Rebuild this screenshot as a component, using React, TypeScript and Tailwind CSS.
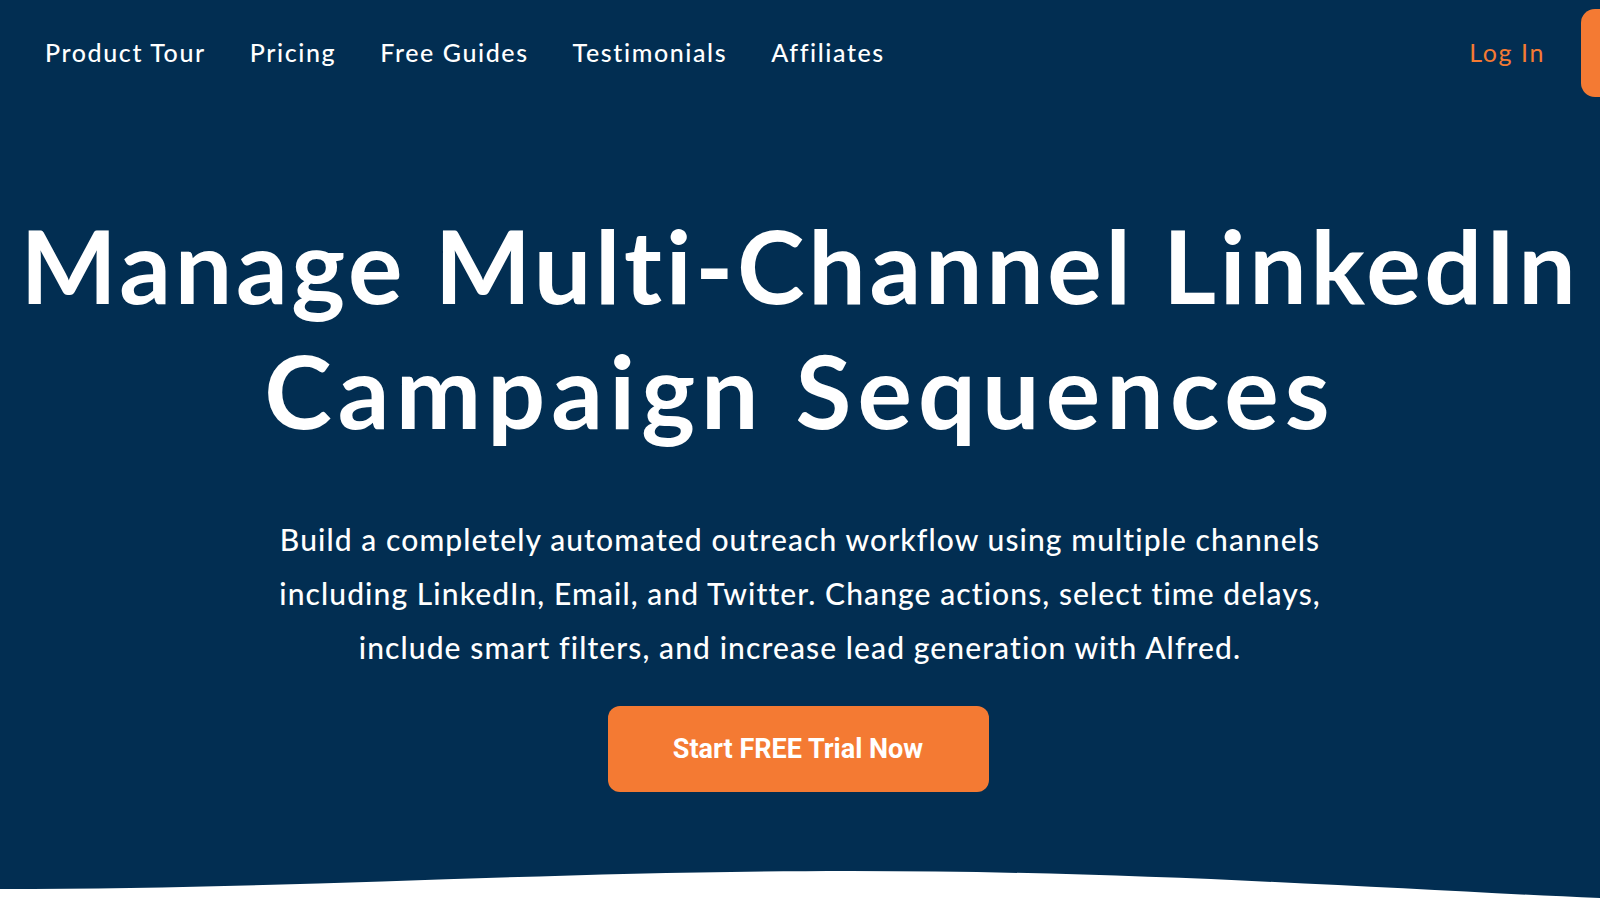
const navItems = ["Product Tour", "Pricing", "Free Guides", "Testimonials", "Affiliates"];

const NavBar = () => {
  return (
    <div className="flex items-center justify-between pl-[45px] h-[106px]">
      <ul className="flex items-center gap-[44px]">
        {navItems.map((item) => (
          <li key={item} className="text-[25px] tracking-[1.6px] text-white font-medium font-['Lato',sans-serif]">
            {item}
          </li>
        ))}
      </ul>
      <div className="flex items-center gap-[36px]">
        <span className="text-[25px] tracking-[1.6px] text-[#f47a33] font-normal font-['Lato',sans-serif]">Log In</span>
        <div className="w-[19px] h-[88px] rounded-l-[14px] bg-[#f47a33]" />
      </div>
    </div>
  );
};

const Wave = () => (
  <svg className="mt-auto block w-full h-[30px]" viewBox="0 0 1600 30" preserveAspectRatio="none">
    <path d="M0 19 C300 19, 550 1, 850 1 C1150 1, 1400 20, 1600 28 L1600 30 L0 30 Z" fill="#ffffff" />
  </svg>
);

export default function App() {
  return (
    <div className="w-full h-[900px] overflow-hidden bg-[#022e52] flex flex-col">
      <NavBar />
      <div className="flex flex-col items-center text-center">
        <h1 className="mt-[96px] text-[102px] leading-[125px] font-bold text-white font-['Lato',sans-serif]">
          <span className="block tracking-[3.7px]">Manage Multi-Channel LinkedIn</span>
          <span className="block tracking-[6.1px]">Campaign Sequences</span>
        </h1>
        <p className="mt-[60px] text-[30px] leading-[54px] tracking-[1.1px] font-medium text-white font-['Lato',sans-serif]">
          Build a completely automated outreach workflow using multiple channels
          <br />
          including LinkedIn, Email, and Twitter. Change actions, select time delays,
          <br />
          include smart filters, and increase lead generation with Alfred.
        </p>
        <button className="mt-[32px] -ml-[4px] w-[381px] h-[86px] rounded-[12px] bg-[#f47a33] text-white text-[27px] font-bold font-['Roboto',sans-serif]">
          Start FREE Trial Now
        </button>
      </div>
      <Wave />
    </div>
  );
}
